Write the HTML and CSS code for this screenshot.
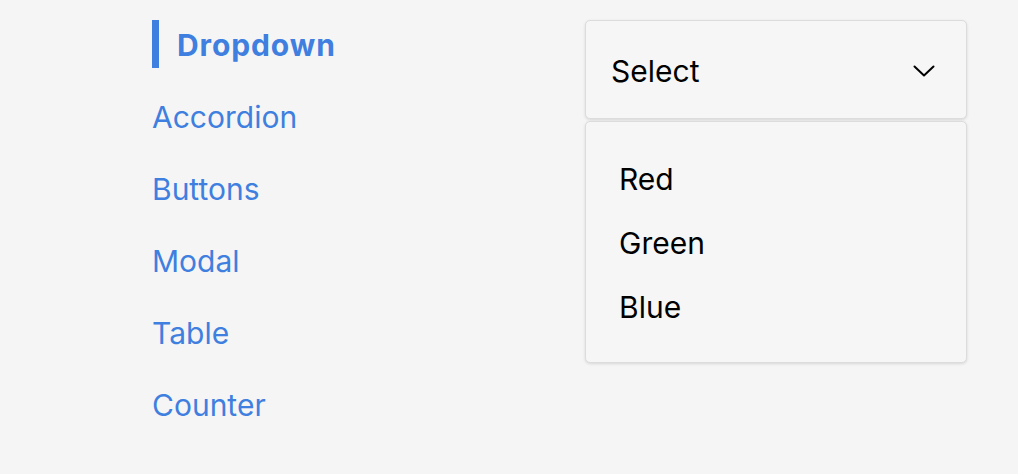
FILE: index.html
```html
<!DOCTYPE html>
<html lang="en">
<head>
<meta charset="utf-8">
<title>Dropdown</title>
<link rel="stylesheet" href="styles.css">
</head>
<body>
<div class="page">
  <nav class="nav">
    <a class="nav-item active" href="#">Dropdown</a>
    <a class="nav-item" href="#">Accordion</a>
    <a class="nav-item" href="#">Buttons</a>
    <a class="nav-item" href="#">Modal</a>
    <a class="nav-item" href="#">Table</a>
    <a class="nav-item" href="#">Counter</a>
  </nav>
  <div class="dropdown">
    <button class="select" type="button">
      <span>Select</span>
      <svg class="chevron" width="22" height="12" viewBox="0 0 22 12" aria-hidden="true">
        <path d="M1.5 1.5 L11 10.5 L20.5 1.5" fill="none" stroke="#000" stroke-width="2" stroke-linecap="round" stroke-linejoin="round"/>
      </svg>
    </button>
    <ul class="menu">
      <li class="option">Red</li>
      <li class="option">Green</li>
      <li class="option">Blue</li>
    </ul>
  </div>
</div>
</body>
</html>
```
FILE: styles.css
```css
html, body {
  margin: 0;
  padding: 0;
  background: #f5f5f5;
  font-family: Inter, "Liberation Sans", Arial, sans-serif;
  height: 100%;
}

.page {
  display: flex;
  padding: 20px 0 0 152px;
}

.nav {
  display: flex;
  flex-direction: column;
  gap: 24px;
  width: 433px;
}

.nav-item {
  display: block;
  height: 48px;
  line-height: 50px;
  font-size: 30px;
  color: #3f7fdf;
  text-decoration: none;
}

.nav-item.active {
  font-weight: 700;
  border-left: 7px solid #3f7fdf;
  padding-left: 18px;
  letter-spacing: 0.9px;
}

.dropdown {
  width: 382px;
  display: flex;
  flex-direction: column;
  gap: 2px;
}

.select {
  display: flex;
  align-items: center;
  justify-content: space-between;
  height: 99px;
  box-sizing: border-box;
  padding: 3px 31px 0 25px;
  background: #f6f6f6;
  border: 1px solid #dcdcdc;
  border-radius: 5px;
  box-shadow: 0 1px 3px rgba(0,0,0,0.12);
  font-family: inherit;
  font-size: 30px;
  color: #000;
  text-align: left;
  cursor: pointer;
}

.menu {
  list-style: none;
  margin: 0;
  padding: 25px 0 25px 0;
  background: #f6f6f6;
  border: 1px solid #dcdcdc;
  border-radius: 5px;
  box-shadow: 0 1px 3px rgba(0,0,0,0.12);
  height: 242px;
  box-sizing: border-box;
}

.option {
  height: 64px;
  line-height: 64px;
  padding-left: 33px;
  font-size: 30px;
  color: #000;
}
```
